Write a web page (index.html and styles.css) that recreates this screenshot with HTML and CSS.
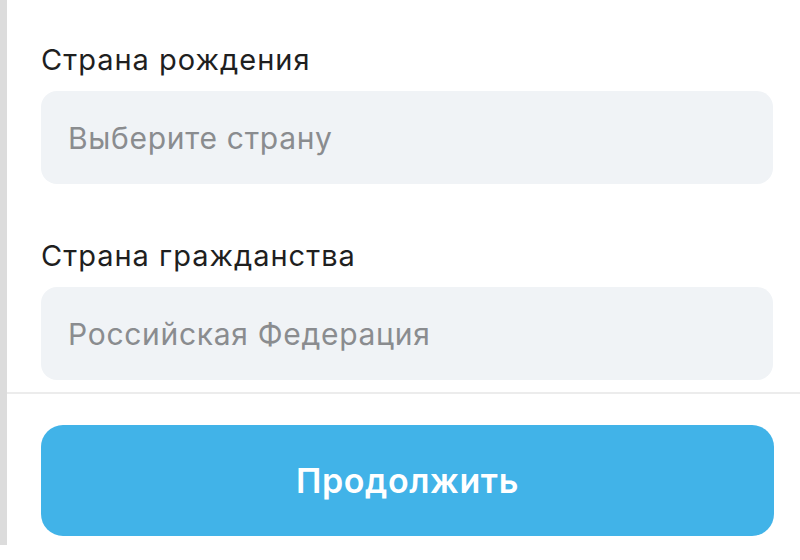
FILE: index.html
```html
<!DOCTYPE html>
<html lang="ru">
<head>
<meta charset="utf-8">
<link rel="stylesheet" href="styles.css">
</head>
<body>
<div class="page">
  <div class="form">
    <div class="field">
      <div class="label">Страна рождения</div>
      <div class="input placeholder">Выберите страну</div>
    </div>
    <div class="field second">
      <div class="label">Страна гражданства</div>
      <div class="input placeholder">Российская Федерация</div>
    </div>
  </div>
  <div class="footer">
    <button class="btn">Продолжить</button>
  </div>
</div>
</body>
</html>
```
FILE: styles.css
```css
html, body {
  margin: 0;
  padding: 0;
  background: #ffffff;
}
body {
  font-family: Inter, "Noto Sans", sans-serif;
  width: 800px;
  height: 560px;
  overflow: hidden;
}
.page {
  border-left: 7px solid #dcdcdc;
  height: 545px;
  display: flex;
  flex-direction: column;
}
.form {
  padding: 43px 27px 0 34px;
  display: flex;
  flex-direction: column;
}
.field {
  display: flex;
  flex-direction: column;
}
.field.second {
  margin-top: 55px;
}
.label {
  font-size: 29px;
  line-height: 34px;
  letter-spacing: 1px;
  color: #1f1f1f;
  margin-bottom: 14px;
}
.input {
  height: 93px;
  border-radius: 16px;
  background: #f0f3f6;
  display: flex;
  align-items: center;
  padding-left: 27px;
  font-size: 30px;
  letter-spacing: 0.7px;
}
.placeholder {
  color: #8a8c8f;
}
.footer {
  margin-top: 12px;
  border-top: 2px solid #ececec;
  padding: 31px 26px 0 34px;
}
.btn {
  width: 100%;
  height: 111px;
  border: none;
  border-radius: 22px;
  background: #41b3e8;
  color: #ffffff;
  font-family: Inter, "Noto Sans", sans-serif;
  font-size: 34px;
  font-weight: 600;
  letter-spacing: 0.6px;
  padding: 0;
}
```
